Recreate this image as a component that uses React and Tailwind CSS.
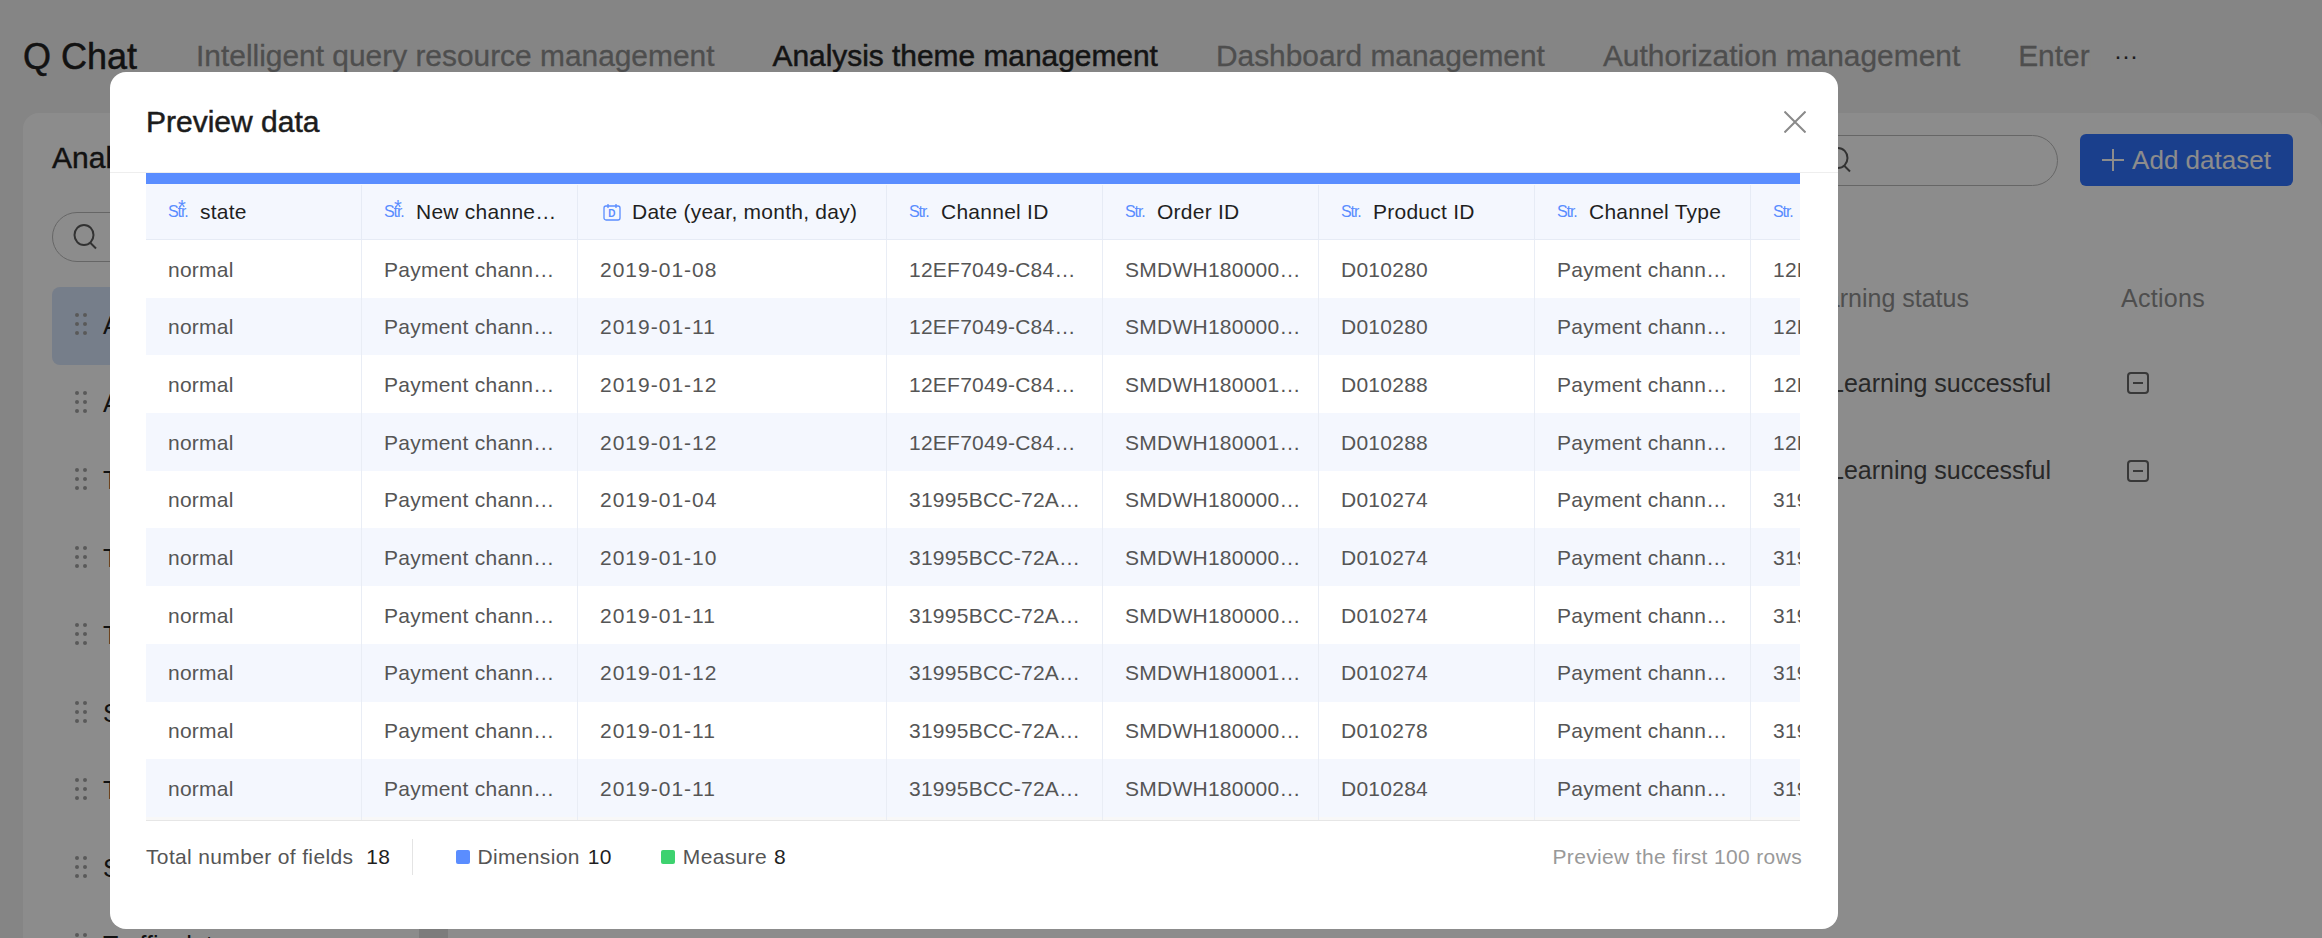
const COLS = ['w-[216px]', 'w-[216px]', 'w-[309px]', 'w-[216px]', 'w-[216px]', 'w-[216px]', 'w-[216px]', 'w-[216px]'];

const HEADS = [
  ['star', 'state'],
  ['star', 'New channel type'],
  ['date', 'Date (year, month, day)'],
  ['str', 'Channel ID'],
  ['str', 'Order ID'],
  ['str', 'Product ID'],
  ['str', 'Channel Type'],
  ['str', 'Channel name'],
];

const P = 'Payment channel name';
const A = '12EF7049-C84D-4A11-9B';
const B = '31995BCC-72AE-4F10-8C';
const ROWS = [
  ['normal', P, '2019-01-08', A, 'SMDWH1800001122', 'D010280', P, A],
  ['normal', P, '2019-01-11', A, 'SMDWH1800002210', 'D010280', P, A],
  ['normal', P, '2019-01-12', A, 'SMDWH1800012231', 'D010288', P, A],
  ['normal', P, '2019-01-12', A, 'SMDWH1800013345', 'D010288', P, A],
  ['normal', P, '2019-01-04', B, 'SMDWH1800004410', 'D010274', P, B],
  ['normal', P, '2019-01-10', B, 'SMDWH1800005561', 'D010274', P, B],
  ['normal', P, '2019-01-11', B, 'SMDWH1800006672', 'D010274', P, B],
  ['normal', P, '2019-01-12', B, 'SMDWH1800017783', 'D010274', P, B],
  ['normal', P, '2019-01-11', B, 'SMDWH1800008894', 'D010278', P, B],
  ['normal', P, '2019-01-11', B, 'SMDWH1800009905', 'D010284', P, B],
];

const SIDE = ['Agent data', 'Advertising data', 'Transaction data', 'Ticket data', 'Trade data', 'Sales data', 'Tenant data', 'Store data', 'Traffic data'];

function TypeIcon({ kind }) {
  if (kind === 'date') {
    return (
      <span className="w-[22px] shrink-0 flex">
        <svg width="18" height="18" viewBox="0 0 18 18" fill="none" className="ml-[3px]">
          <rect x="1" y="3" width="16" height="14" rx="2" stroke="#5a8dff" strokeWidth="1.3" />
          <path d="M5 1v4M13 1v4" stroke="#5a8dff" strokeWidth="1.3" />
          <text x="9" y="14" textAnchor="middle" fontSize="10" fontWeight="700" fill="#5a8dff" fontFamily="Liberation Sans">D</text>
        </svg>
      </span>
    );
  }
  return (
    <span className="relative w-[22px] shrink-0 text-[16px] tracking-[-1.1px] leading-none text-[#5a8dff]">
      Str.
      {kind === 'star' && <span className="absolute left-[10px] top-[-7px] text-[20px] leading-none">*</span>}
    </span>
  );
}

function DragDots() {
  return (
    <svg width="12" height="22" viewBox="0 0 12 22" fill="#a3a3a3" className="mb-[3px] shrink-0">
      <rect x="0" y="0" width="4" height="4" rx="2" />
      <rect x="8" y="0" width="4" height="4" rx="2" />
      <rect x="0" y="9" width="4" height="4" rx="2" />
      <rect x="8" y="9" width="4" height="4" rx="2" />
      <rect x="0" y="18" width="4" height="4" rx="2" />
      <rect x="8" y="18" width="4" height="4" rx="2" />
    </svg>
  );
}

function Magnifier() {
  return (
    <svg width="24" height="26" viewBox="0 0 24 26" fill="none" stroke="#5c5c5c" strokeWidth="2" className="shrink-0">
      <ellipse cx="11" cy="11" rx="9.5" ry="10" />
      <path d="M17 18.5l6 6" />
    </svg>
  );
}

function MinusBox() {
  return (
    <svg width="22" height="22" viewBox="0 0 22 22" fill="none" stroke="#666" strokeWidth="2">
      <rect x="1" y="1" width="20" height="20" rx="3" />
      <path d="M6 11h10" />
    </svg>
  );
}

export default function App() {
  return (
    <div className="relative h-[938px] w-[2322px] overflow-hidden bg-[#f3f3f3] [font-family:'Liberation_Sans',Arial,sans-serif]">
      {/* Page behind the dialog */}
      <div className="flex h-[113px] items-start pl-[23px]">
        <span className="mt-[36px] text-[36px] leading-[42px] text-[#222] [-webkit-text-stroke:0.5px_#222]">Q Chat</span>
        <div className="ml-[59px] mt-[23px] flex h-[67px] w-[1895px] shrink-0 items-center gap-[58px] overflow-hidden text-[29.9px] text-[#8f8f8f]">
          <span className="shrink-0 [-webkit-text-stroke:0.3px_#8f8f8f]">Intelligent query resource management</span>
          <span className="shrink-0 text-[#262626] [-webkit-text-stroke:0.5px_#262626]">Analysis theme management</span>
          <span className="shrink-0 [-webkit-text-stroke:0.3px_#8f8f8f]">Dashboard management</span>
          <span className="shrink-0 [-webkit-text-stroke:0.3px_#8f8f8f]">Authorization management</span>
          <span className="shrink-0 [-webkit-text-stroke:0.3px_#8f8f8f]">Enterprise management</span>
        </div>
        <span className="ml-[23px] mt-[44px] text-[24px] leading-none text-[#333]">···</span>
      </div>

      <div className="relative ml-[23px] flex h-[825px] rounded-t-[16px] bg-white">
        <div className="w-[400px] shrink-0 pl-[29px] pr-[20px]">
          <div className="mt-[27px] text-[30px] leading-[36px] text-[#222] [-webkit-text-stroke:0.4px_#222]">Analysis theme</div>
          <div className="mt-[36px] flex h-[50px] items-center rounded-full border border-[#bbb] pl-[20px]">
            <Magnifier />
          </div>
          <div className="mt-[25px]">
            {SIDE.map((s, i) => (
              <div key={s} className={`flex h-[77.5px] items-center gap-[16px] rounded-[8px] pl-[23px] text-[25px] text-[#222] ${i === 0 ? 'bg-[#d8e5fb]' : ''}`}>
                <DragDots />
                <span>{s}</span>
              </div>
            ))}
          </div>
        </div>

        <div className="absolute left-[396px] top-[787px] h-[38px] w-[29px] bg-[#e2e2e2]" />

        <div className="flex-1 pr-[29px]">
          <div className="mt-[21px] flex items-center justify-end gap-[22px]">
            <div className="flex h-[51px] w-[300px] items-center rounded-full border border-[#bbb] pl-[68px]">
              <Magnifier />
            </div>
            <div className="flex h-[52px] w-[213px] items-center justify-center gap-[8px] rounded-[6px] bg-[#3173ff] text-[26px] text-white">
              <svg width="22" height="22" viewBox="0 0 22 22" stroke="#fff" strokeWidth="2"><path d="M11 0v22M0 11h22" /></svg>
              <span>Add dataset</span>
            </div>
          </div>
          <div className="mt-[94px] flex justify-end text-[25px] text-[#8f8f8f]">
            <span className="w-[323px]">Learning status</span>
            <span className="w-[172px] tracking-[0.3px]">Actions</span>
          </div>
          <div className="mt-[47px] flex items-center justify-end text-[25px] text-[#4a4a4a]">
            <span className="w-[297px]">Learning successful</span>
            <span className="w-[166px]"><MinusBox /></span>
          </div>
          <div className="mt-[50px] flex items-center justify-end text-[25px] text-[#4a4a4a]">
            <span className="w-[297px]">Learning successful</span>
            <span className="w-[166px]"><MinusBox /></span>
          </div>
        </div>
      </div>

      {/* Overlay */}
      <div className="absolute inset-0 bg-black/45" />

      {/* Dialog */}
      <div className="absolute left-[110px] top-[72px] flex h-[857px] w-[1728px] flex-col rounded-[16px] bg-white">
        <div className="box-content flex h-[100px] shrink-0 items-center justify-between border-b border-[#eeeeee] pl-[36px] pr-[32px]">
          <span className="mb-[2px] text-[30px] text-[#1c1c1c] [-webkit-text-stroke:0.5px_#1c1c1c]">Preview data</span>
          <svg width="22" height="22" viewBox="0 0 22 22" stroke="#8a8a8a" strokeWidth="2" className="mb-[1px]"><path d="M0.5 0.5l21 21M21.5 0.5l-21 21" /></svg>
        </div>

        <div className="ml-[36px] w-[1654px] overflow-hidden">
          <div className="h-[11px] bg-[#5a8dff]" />
          <div className="flex h-[56px] border-b border-[#e6ebf5] bg-[#f4f7fe] pt-[1px] text-[21px] tracking-[0.25px] text-[#1f1f1f]">
            {HEADS.map(([k, t], i) => (
              <div key={t} className={`${COLS[i]} flex shrink-0 items-center gap-[10px] border-r border-[#e6ebf5] pl-[22px] pr-[17px]`}>
                <TypeIcon kind={k} />
                <span className="truncate">{t}</span>
              </div>
            ))}
          </div>
          {ROWS.map((r, ri) => (
            <div key={ri} className={`flex h-[57.7px] text-[21px] tracking-[0.25px] text-[#555] ${ri % 2 === 1 ? 'bg-[#f4f7fe]' : 'bg-white'}`}>
              {r.map((c, ci) => (
                <div key={ci} className={`${COLS[ci]} flex shrink-0 items-center border-r border-[#e9edf5] pl-[22px] pr-[17px] pt-[1px]`}>
                  <span className={`truncate ${ci === 2 ? 'tracking-[1px]' : ''}`}>{c}</span>
                </div>
              ))}
            </div>
          ))}
          <div className="flex h-[4px] border-b border-[#e6e6e6] bg-[#f8f8f8]">
            {COLS.map((c, i) => (
              <div key={i} className={`${c} shrink-0 border-r border-[#e9edf5]`} />
            ))}
          </div>
        </div>

        <div className="ml-[36px] flex h-[72px] w-[1656px] items-center text-[21px] tracking-[0.35px] text-[#555]">
          <span>Total number of fields</span>
          <span className="ml-[13px] text-[#1f1f1f]">18</span>
          <span className="ml-[22px] h-[36px] w-px bg-[#e4e4e4]" />
          <span className="ml-[43px] h-[14px] w-[14px] rounded-[2px] bg-[#5a8dff]" />
          <span className="ml-[7px]">Dimension</span>
          <span className="ml-[8px] text-[#1f1f1f]">10</span>
          <span className="ml-[49px] h-[14px] w-[14px] rounded-[2px] bg-[#3dd26f]" />
          <span className="ml-[8px]">Measure</span>
          <span className="ml-[7px] text-[#1f1f1f]">8</span>
          <span className="ml-auto text-[#999]">Preview the first 100 rows</span>
        </div>
      </div>
    </div>
  );
}
